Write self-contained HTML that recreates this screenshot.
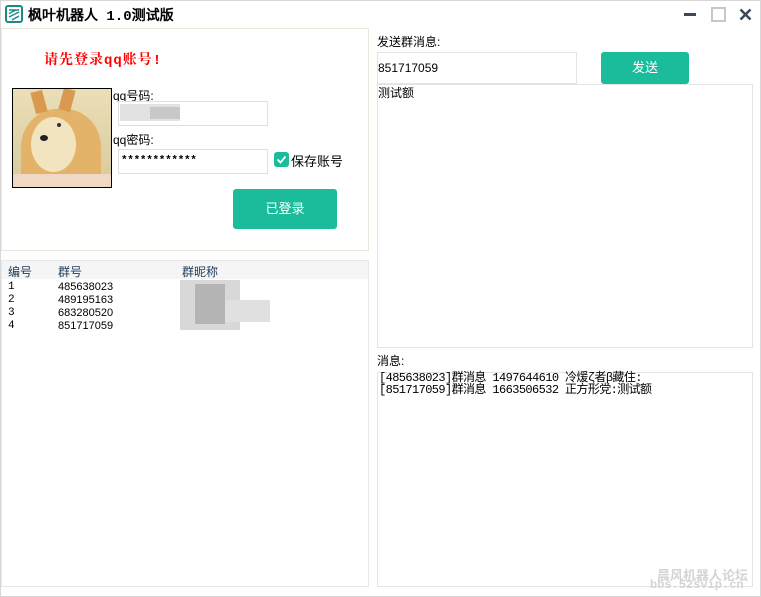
<!DOCTYPE html>
<html><head><meta charset="utf-8"><style>
*{margin:0;padding:0;box-sizing:border-box}
body{width:761px;height:597px;background:#fff;font-family:"Liberation Sans","WenQuanYi Zen Hei","Noto Sans CJK SC",sans-serif;font-size:12px;color:#000;position:relative;overflow:hidden}
.win{position:absolute;left:0;top:0;width:761px;height:597px;border:1px solid #d8d8d8}
.a{position:absolute}
.box{position:absolute;border:1px solid #e2e2e2;background:#fff}
.px{position:absolute}
</style></head><body>
<div class="win"></div>
<svg class="a" style="left:5px;top:5px" width="18" height="18" viewBox="0 0 18 18"><rect x="1" y="1" width="16" height="16" rx="2" fill="#fff" stroke="#1b8a80" stroke-width="2"/><path d="M4 5h10M4 8.5l7-3.5M4 12l10-5M7 15l7-4" stroke="#1b8a80" stroke-width="1.5" fill="none"/></svg>
<div class="a" style="left:28px;top:5px;font-size:14px;font-weight:bold;font-family:'Liberation Mono','WenQuanYi Zen Hei',monospace">枫叶机器人 1.0测试版</div>
<div class="a" style="left:684px;top:13px;width:12px;height:3px;background:#3a4a5c"></div>
<div class="a" style="left:711px;top:7px;width:15px;height:15px;border:2px solid #c4c8cc"></div>
<svg class="a" style="left:739px;top:8px" width="13" height="13"><path d="M1.5 1.5l10 10M11.5 1.5l-10 10" stroke="#3a4a5c" stroke-width="2.6"/></svg>
<div class="box" style="left:1px;top:28px;width:368px;height:223px;border-color:#e8e8dc"></div>
<div class="a" style="left:44px;top:49px;color:#f00;font-weight:bold;font-size:14px;letter-spacing:1px;font-family:'Liberation Mono','Noto Serif CJK SC',serif">请先登录qq账号!</div>
<div class="a" style="left:12px;top:88px;width:100px;height:100px;border:1px solid #000;overflow:hidden;background:linear-gradient(#eadfb8,#d9c99c)">
 <div class="a" style="left:8px;top:20px;width:80px;height:85px;border-radius:45% 45% 20% 20%;background:#e3b36a"></div>
 <div class="a" style="left:18px;top:28px;width:45px;height:55px;border-radius:50%;background:#f3e4c0"></div>
 <div class="a" style="left:20px;top:2px;width:12px;height:22px;background:#d99a50;transform:rotate(-15deg)"></div>
 <div class="a" style="left:48px;top:0px;width:12px;height:22px;background:#d99a50;transform:rotate(15deg)"></div>
 <div class="a" style="left:27px;top:46px;width:8px;height:6px;border-radius:50%;background:#222"></div>
 <div class="a" style="left:44px;top:34px;width:4px;height:4px;border-radius:50%;background:#333"></div>
 <div class="a" style="left:0;top:85px;width:100px;height:15px;background:#efd9c4"></div>
</div>
<div class="a" style="left:113px;top:87px">qq号码:</div>
<div class="box" style="left:118px;top:101px;width:150px;height:25px;border-color:#e0e0e0"></div>
<div class="px" style="left:120px;top:104px;width:60px;height:17px;background:#e2e2e2"></div>
<div class="px" style="left:150px;top:107px;width:30px;height:12px;background:#c8c8c8"></div>
<div class="a" style="left:113px;top:131px">qq密码:</div>
<div class="box" style="left:118px;top:149px;width:150px;height:25px;border-color:#e0e0e0"></div>
<div class="a" style="left:121px;top:155px;font-family:'Liberation Mono',monospace;font-size:11px;font-weight:bold;letter-spacing:-0.3px">************</div>
<div class="a" style="left:274px;top:152px;width:15px;height:15px;background:#1bbc9b;border-radius:3px"></div>
<svg class="a" style="left:274px;top:152px" width="15" height="15"><path d="M3.5 7.5l3 3 5-6" stroke="#fff" stroke-width="1.8" fill="none"/></svg>
<div class="a" style="left:291px;top:151px;font-size:13px">保存账号</div>
<div class="a" style="left:233px;top:189px;width:104px;height:40px;background:#1bbc9b;border-radius:3px;color:#fff;text-align:center;line-height:40px;font-size:13px">已登录</div>
<div class="box" style="left:1px;top:260px;width:368px;height:327px;border-color:#e8e8e8"></div>
<div class="a" style="left:2px;top:261px;width:366px;height:18px;background:#f5f5f5"></div>
<div class="a" style="left:8px;top:263px;color:#1c3a5a">编号</div>
<div class="a" style="left:58px;top:263px;color:#1c3a5a">群号</div>
<div class="a" style="left:182px;top:263px;color:#1c3a5a">群昵称</div>
<div class="a" style="left:8px;top:281px;line-height:13px;font-size:11px;font-family:'Liberation Mono',monospace">1<br>2<br>3<br>4</div>
<div class="a" style="left:58px;top:281px;line-height:13px;font-size:11px">485638023<br>489195163<br>683280520<br>851717059</div>
<div class="px" style="left:180px;top:280px;width:60px;height:50px;background:#d8d8d8"></div>
<div class="px" style="left:195px;top:284px;width:30px;height:40px;background:#b4b4b4"></div>
<div class="px" style="left:225px;top:300px;width:45px;height:22px;background:#e0e0e0"></div>
<div class="a" style="left:377px;top:33px">发送群消息:</div>
<div class="box" style="left:377px;top:52px;width:200px;height:32px;border-color:#e4e4e4"></div>
<div class="a" style="left:378px;top:61px">851717059</div>
<div class="a" style="left:601px;top:52px;width:88px;height:32px;background:#1bbc9b;border-radius:3px;color:#fff;text-align:center;line-height:32px;font-size:13px">发送</div>
<div class="box" style="left:377px;top:84px;width:376px;height:264px;border-color:#e4e4e4"></div>
<div class="a" style="left:378px;top:84px">测试额</div>
<div class="a" style="left:377px;top:352px">消息:</div>
<div class="box" style="left:377px;top:372px;width:376px;height:215px;border-color:#e4e4e4"></div>
<div class="a" style="left:379px;top:372px;line-height:12px;font-size:12px;white-space:pre;font-family:'Liberation Mono','WenQuanYi Zen Hei',monospace;letter-spacing:-0.6px">[485638023]群消息 1497644610 冷煖ζ者β藏住:
[851717059]群消息 1663506532 正方形党:测试额</div>
<div class="a" style="left:657px;top:565px;color:#d4d4d4;font-size:13px;font-weight:bold">晨风机器人论坛</div>
<div class="a" style="left:650px;top:578px;color:#d4d4d4;font-size:12px;font-family:'Liberation Mono',monospace;font-weight:bold">bbs.52svip.cn</div>
</body></html>
